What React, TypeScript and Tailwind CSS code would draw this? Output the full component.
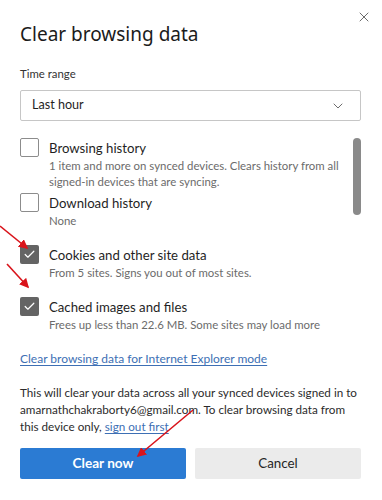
import { Check, ChevronDown, X } from "lucide-react";

function CheckBox({ checked }: { checked: boolean }) {
  return checked ? (
    <div className="w-[19px] h-[19px] shrink-0 rounded-[2px] bg-[#646464] flex items-center justify-center">
      <Check size={13} strokeWidth={2.2} color="#ffffff" />
    </div>
  ) : (
    <div className="w-[19px] h-[19px] shrink-0 rounded-[2px] border border-[#8c8c8c] bg-white" />
  );
}

function Option({
  checked,
  title,
  lines,
  className,
}: {
  checked: boolean;
  title: string;
  lines: string[];
  className?: string;
}) {
  return (
    <div className={`flex gap-[10px] ${className ?? ""}`}>
      <CheckBox checked={checked} />
      <div className="flex flex-col">
        <p className="text-[13.2px] leading-[20px] text-[#1f1f1f] whitespace-nowrap">{title}</p>
        {lines.map((line) => (
          <p key={line} className="text-[11.4px] leading-[16px] text-[#6b6b6b] whitespace-nowrap">
            {line}
          </p>
        ))}
      </div>
    </div>
  );
}

function Arrows() {
  return (
    <svg className="absolute inset-0 pointer-events-none" width="382" height="500" viewBox="0 0 382 500">
      <defs>
        <marker id="head" markerWidth="6" markerHeight="6" refX="5" refY="3" orient="auto" markerUnits="strokeWidth">
          <path d="M0,0 L6,3 L0,6 z" fill="#d9141b" />
        </marker>
      </defs>
      <line x1="0" y1="226" x2="27" y2="248" stroke="#d9141b" strokeWidth="1.6" markerEnd="url(#head)" />
      <line x1="7" y1="264" x2="28" y2="287" stroke="#d9141b" strokeWidth="1.6" markerEnd="url(#head)" />
      <line x1="193" y1="410" x2="138" y2="456" stroke="#d9141b" strokeWidth="1.6" markerEnd="url(#head)" />
    </svg>
  );
}

export default function App() {
  return (
    <div className="relative w-[382px] h-[500px] bg-white overflow-hidden font-['Lato',sans-serif]">
      <button className="absolute left-[356px] top-[9px] text-[#555]">
        <X size={16} strokeWidth={1.3} />
      </button>

      <div className="pl-5 pr-[21px] pt-[21px]">
        <h1 className="text-[19px] leading-[26px] text-[#1b1b1b] font-['Noto_Sans',sans-serif]">Clear browsing data</h1>

        <p className="mt-[18px] text-[11.4px] leading-[18px] text-[#333]">Time range</p>

        <div className="mt-[7px] h-[31px] border border-[#c6c6c6] rounded-[2px] flex items-center justify-between pl-[11px] pr-[14px]">
          <span className="text-[12.6px] text-[#1f1f1f]">Last hour</span>
          <ChevronDown size={16} strokeWidth={1.3} color="#555" />
        </div>

        {/* options list with scrollbar */}
        <div className="mt-[17px] flex">
          <div className="flex-1">
            <Option
              checked={false}
              title="Browsing history"
              lines={[
                "1 item and more on synced devices. Clears history from all",
                "signed-in devices that are syncing.",
              ]}
            />
            <Option checked={false} title="Download history" lines={["None"]} className="mt-[3px]" />
            <Option
              checked
              title="Cookies and other site data"
              lines={["From 5 sites. Signs you out of most sites."]}
              className="mt-[16px]"
            />
            <Option
              checked
              title="Cached images and files"
              lines={["Frees up less than 22.6 MB. Some sites may load more"]}
              className="mt-[16px]"
            />
          </div>
          <div className="w-[8px] h-[77px] rounded-full bg-[#8a8a8a]" />
        </div>

        <a className="block mt-[17px] text-[12px] leading-[18px] text-[#3d6fb4] underline underline-offset-2 whitespace-nowrap">
          Clear browsing data for Internet Explorer mode
        </a>

        <p className="mt-[16px] text-[11.7px] leading-[17px] text-[#2b2b2b] whitespace-nowrap">
          This will clear your data across all your synced devices signed in to
          <br />
          amarnathchakraborty6@gmail.com. To clear browsing data from
          <br />
          this device only, <span className="text-[#3d6fb4] underline underline-offset-2">sign out first</span>
        </p>

        <div className="mt-[13px] grid grid-cols-2 gap-[9px]">
          <button className="h-[31px] rounded-[2px] bg-[#2b7bd3] text-white text-[13.6px] font-bold">Clear now</button>
          <button className="h-[31px] rounded-[2px] bg-[#ebebeb] text-[#262626] text-[13.4px]">Cancel</button>
        </div>
      </div>

      <Arrows />
    </div>
  );
}
